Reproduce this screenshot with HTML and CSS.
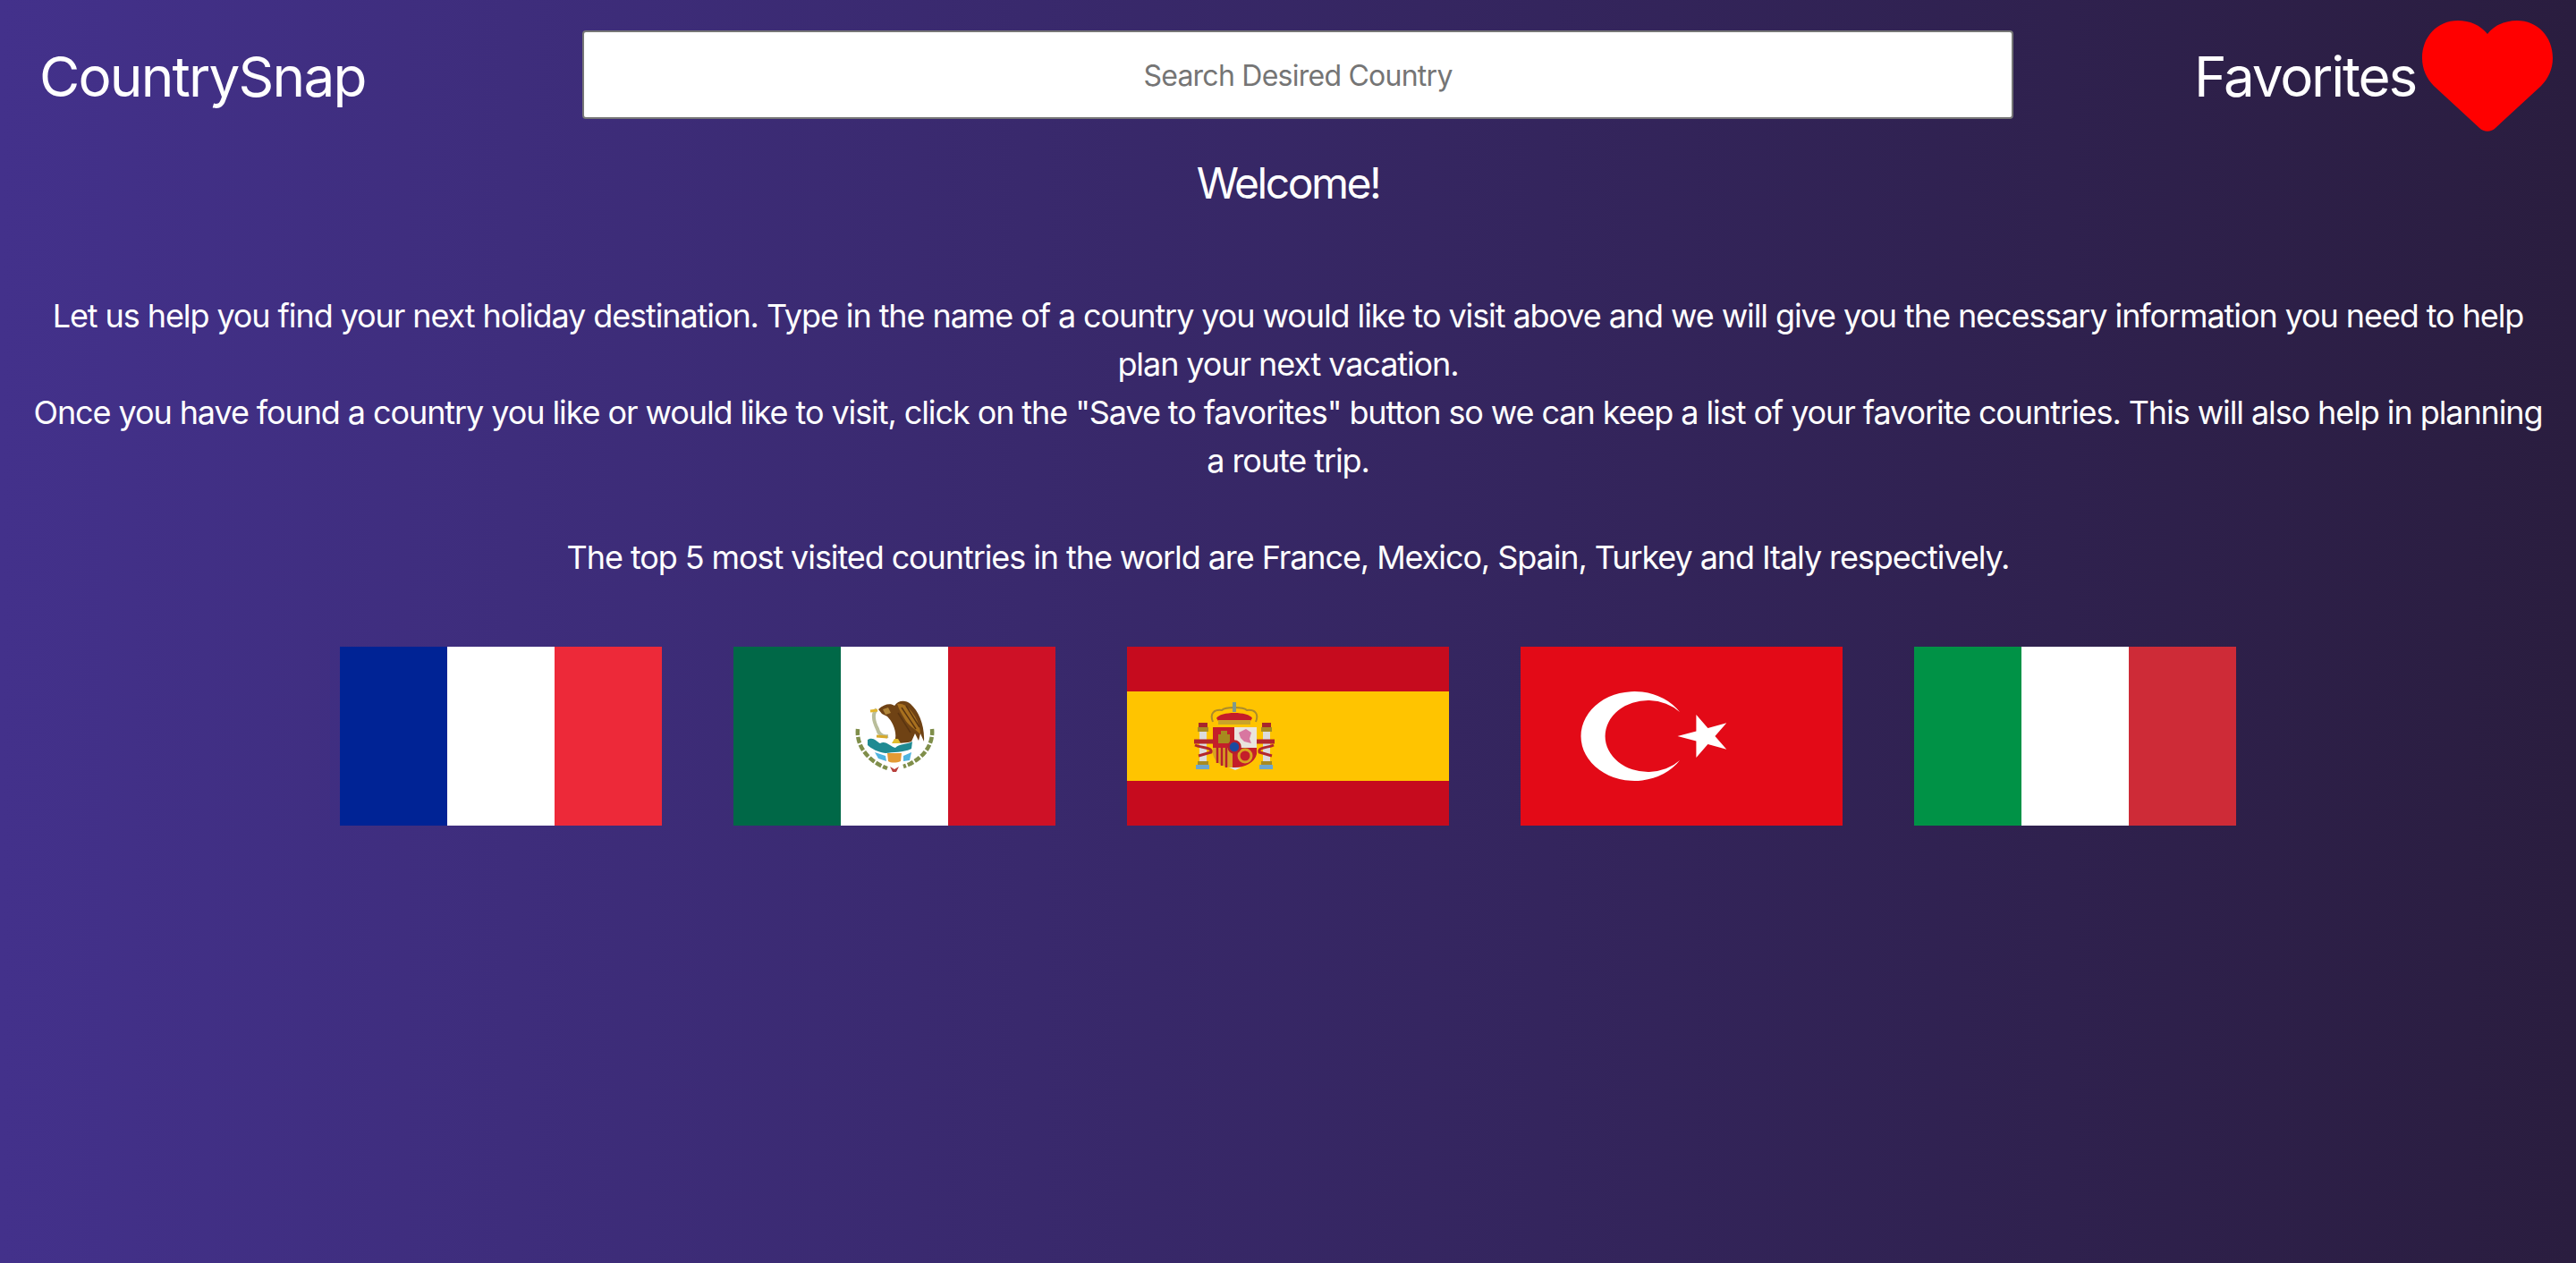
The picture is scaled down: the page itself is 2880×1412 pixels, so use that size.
FILE: index.html
```html
<!DOCTYPE html>
<html lang="en">
<head>
    <meta charset="UTF-8">
    <meta name="viewport" content="width=device-width, initial-scale=1.0">
    <title>CountrySnap</title>
    <link rel="stylesheet" href="styles.css">
</head>
<body>
    <header class="topBar">
        <h1 class="brand">CountrySnap</h1>
        <input class="searchInput" type="text" placeholder="Search Desired Country">
        <a class="favLink" href="#">
            <span>Favorites</span>
            <svg class="heart" viewBox="0 0 146 124" aria-hidden="true">
                <path d="M73 15C65 5 53 0 40 0C17 0 0 18 0 42C0 54 5 65 13 73L64 120C69 125 77 125 82 120L133 73C141 65 146 54 146 42C146 18 129 0 106 0C93 0 81 5 73 15Z"/>
            </svg>
        </a>
    </header>

    <main class="welcome">
        <h2 class="welcomeTitle">Welcome!</h2>
        <p class="intro">Let us help you find your next holiday destination. Type in the name of a country you would like to visit above and we will give you the necessary information you need to help plan your next vacation.<br>Once you have found a country you like or would like to visit, click on the "Save to favorites" button so we can keep a list of your favorite countries. This will also help in planning a route trip.</p>
        <p class="topFive">The top 5 most visited countries in the world are France, Mexico, Spain, Turkey and Italy respectively.</p>

        <div class="flagRow">
            <!-- France -->
            <svg class="flag" viewBox="0 0 360 200">
                <rect width="120" height="200" fill="#002395"/>
                <rect x="120" width="120" height="200" fill="#fff"/>
                <rect x="240" width="120" height="200" fill="#ed2939"/>
            </svg>
            <!-- Mexico -->
            <svg class="flag" viewBox="0 0 360 200">
                <rect width="120" height="200" fill="#006847"/>
                <rect x="120" width="120" height="200" fill="#fff"/>
                <rect x="240" width="120" height="200" fill="#ce1126"/>
                <!-- wreath -->
                <path d="M139 92C137 110 150 128 172 136" fill="none" stroke="#7f8e4a" stroke-width="4.500" stroke-dasharray="7 2"/>
                <path d="M222 92C224 110 211 127 190 134" fill="none" stroke="#7f8e4a" stroke-width="4.500" stroke-dasharray="7 2"/>
                <path d="M175 134L180 137L185 134L182 140H178Z" fill="#b8413d"/>
                <!-- snake -->
                <path d="M160 70C154 76 158 86 161 92C162 97 166 101 173 100" fill="none" stroke="#b9bd9a" stroke-width="4"/>
                <path d="M153 72L161 71" stroke="#e3b62c" stroke-width="3"/>
                <path d="M160 100L172 101" stroke="#d8a928" stroke-width="3"/>
                <!-- eagle -->
                <path d="M162 70C168 64 176 63 180 66C184 60 192 59 198 64C207 72 214 88 213 106L209 97L207 105L203 97L199 106C192 108 186 108 180 107C184 96 178 84 172 78L166 75Z" fill="#6f4214"/>
                <path d="M183 64C191 62 198 70 203 78C207 85 209 92 209 98C203 92 195 88 191 80C188 75 185 70 183 64Z" fill="#a8701f"/>
                <path d="M188 68L204 92M193 66L208 90M184 74L198 96" stroke="#5a3410" stroke-width="1.500"/>
                <path d="M167 70L173 68L176 74L170 76Z" fill="#b08438"/>
                <!-- cactus and rock -->
                <path d="M150 104C156 100 160 106 164 108C170 104 176 112 181 113C186 108 194 110 200 106L199 114C192 118 178 118 170 119C162 118 154 114 150 110Z" fill="#1f8a92"/>
                <path d="M177 108L187 108L184 103L180 103Z" fill="#e2bd2d"/>
                <path d="M172 119H188L187 128C182 130 176 130 173 128Z" fill="#e39a35"/>
                <path d="M158 118L170 122L171 128L162 125Z" fill="#4fb4e0"/>
                <path d="M190 122L199 118L197 127L190 128Z" fill="#4fb4e0"/>
            </svg>
            <!-- Spain -->
            <svg class="flag" viewBox="0 0 360 200">
                <rect width="360" height="200" fill="#c60b1e"/>
                <rect y="50" width="360" height="100" fill="#ffc400"/>
                <!-- crown -->
                <path d="M96 84C92 74 98 70 106 71C110 67 130 67 134 71C142 70 148 74 144 84" fill="none" stroke="#ab8b2c" stroke-width="2"/>
                <path d="M100 80C104 72 136 72 140 80L136 86H104Z" fill="#c41e2a"/>
                <rect x="102" y="82" width="36" height="5" fill="#c9a32a"/>
                <rect x="118" y="62" width="4" height="11" fill="#7f9a8c"/>
                <!-- shield -->
                <path d="M96 90H120V113H96Z" fill="#c41e2a"/>
                <path d="M120 90H145V113H120Z" fill="#e9e4de"/>
                <path d="M102 108V98H105V94H112V98H115V108Z" fill="#a78a1e"/>
                <path d="M125 96L133 92L139 96L137 103L139 108L131 106L127 102Z" fill="#d877a0"/>
                <path d="M96 113H118V135C108 135 98 130 96 120Z" fill="#d8a320"/>
                <path d="M101 113V130M106 113V133M111 113V135" stroke="#b5202c" stroke-width="2.500"/>
                <path d="M118 113H145V120C143 130 130 136 118 135Z" fill="#c41e2a"/>
                <circle cx="132" cy="122" r="7" fill="none" stroke="#d8a320" stroke-width="3"/>
                <circle cx="120" cy="112" r="6.500" fill="#1c4aa0" stroke="#b5202c" stroke-width="2.500"/>
                <path d="M114 135H128L121 138Z" fill="#dfe3e6"/>
                <!-- pillars -->
                <rect x="81" y="95" width="8" height="33" fill="#dcdcdc"/>
                <rect x="152" y="95" width="8" height="33" fill="#dcdcdc"/>
                <rect x="79" y="90" width="12" height="5" fill="#a88b22"/>
                <rect x="150" y="90" width="12" height="5" fill="#a88b22"/>
                <rect x="80" y="85" width="10" height="5" fill="#a8262c"/>
                <rect x="151" y="85" width="10" height="5" fill="#a8262c"/>
                <rect x="79" y="128" width="12" height="4" fill="#a88b22"/>
                <rect x="150" y="128" width="12" height="4" fill="#a88b22"/>
                <rect x="77" y="132" width="15" height="5" fill="#6fa6cc"/>
                <rect x="148" y="132" width="15" height="5" fill="#6fa6cc"/>
                <!-- ribbons -->
                <path d="M75 106H96M145 106H165" stroke="#b3262c" stroke-width="5"/>
                <path d="M76 110C82 113 96 112 94 118L80 122" fill="none" stroke="#b3262c" stroke-width="3"/>
                <path d="M164 110C158 113 146 112 148 118L162 122" fill="none" stroke="#b3262c" stroke-width="3"/>
            </svg>
            <!-- Turkey -->
            <svg class="flag" viewBox="0 0 360 200">
                <rect width="360" height="200" fill="#e30a17"/>
                <path fill="#fff" d="M178 73A60 50 0 1 0 178 127A48 40 0 1 1 178 73Z"/>
                <polygon fill="#fff" points="175.500,100 196.400,94.400 196.400,76 209.400,90.900 230.300,85.200 217.400,100 230.300,114.800 209.400,109.100 196.400,124 196.400,105.600"/>
            </svg>
            <!-- Italy -->
            <svg class="flag" viewBox="0 0 360 200">
                <rect width="120" height="200" fill="#009246"/>
                <rect x="120" width="120" height="200" fill="#fff"/>
                <rect x="240" width="120" height="200" fill="#ce2b37"/>
            </svg>
        </div>
    </main>
</body>
</html>
```

FILE: styles.css
```css
* {
    box-sizing: border-box;
}

html, body {
    height: 100%;
}

body {
    margin: 0;
    font-family: Inter, 'Noto Sans', sans-serif;
    color: #fff;
    background-image: linear-gradient(to right, #43318b, #2a1d3f);
}

.topBar {
    display: flex;
    align-items: center;
    height: 170px;
    padding: 0 26px 0 44px;
}

.brand {
    margin: 0;
    width: 607px;
    font-size: 62px;
    font-weight: 400;
    letter-spacing: -1.8px;
}

.searchInput {
    width: 1600px;
    height: 99px;
    margin-bottom: 3px;
    padding-top: 3px;
    border: 2px solid #767676;
    border-radius: 4px;
    background-color: #fff;
    font-family: inherit;
    font-size: 32px;
    letter-spacing: -0.75px;
    text-align: center;
}

.searchInput::placeholder {
    color: #757575;
}

.favLink {
    display: flex;
    align-items: center;
    gap: 7px;
    margin-left: auto;
    color: #fff;
    font-size: 62px;
    letter-spacing: -2.2px;
    text-decoration: none;
}

.heart {
    width: 146px;
    height: 124px;
    fill: #ff0000;
}

.welcome {
    text-align: center;
}

.welcomeTitle {
    margin: 6px 0 92px;
    font-size: 48px;
    line-height: 58px;
    font-weight: 400;
    letter-spacing: -2.5px;
}

.intro,
.topFive {
    padding: 0 24px;
    font-size: 36px;
    line-height: 54px;
    letter-spacing: -1.09px;
}

.intro {
    margin: 0 0 54px;
}

.topFive {
    margin: 0;
}

.flagRow {
    display: flex;
    justify-content: center;
    gap: 80px;
    margin-top: 73px;
}

.flag {
    display: block;
    width: 360px;
    height: 200px;
}
```
